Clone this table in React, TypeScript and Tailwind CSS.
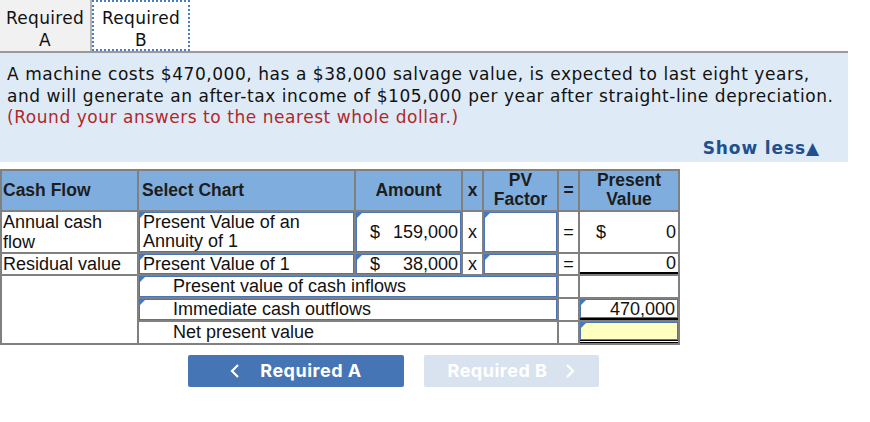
import React from "react";

const Marker = () => (
  <span className="absolute left-0 top-0 w-0 h-0 border-t-[5px] border-r-[5px] border-t-[#3b7bd0] border-r-transparent" />
);

const Input = ({
  children,
  marker = true,
  className = "",
}: {
  children?: React.ReactNode;
  marker?: boolean;
  className?: string;
}) => (
  <div className={`relative box-border overflow-hidden border border-[#4a76b8] ${className}`}>
    {marker && <Marker />}
    {children}
  </div>
);

export default function App() {
  const verdana = { fontFamily: '"DejaVu Sans", Verdana, sans-serif' };
  const arial = { fontFamily: '"Liberation Sans", Arial, sans-serif' };
  const td = "border-2 border-[#808080] p-0";
  return (
    <div className="w-[870px] h-[422px] bg-white text-[#111]" style={verdana}>
      {/* Tabs */}
      <div className="flex w-[848px] border-b-2 border-[#9a9a9a] h-[53px]">
        <div className="w-[92px] bg-[#f1f1f1] border-r-2 border-[#b5b5b5] flex flex-col items-center justify-center pt-[6px] text-[17px] leading-[22px] tracking-[0.3px] text-[#111]">
          <span>Required</span>
          <span>A</span>
        </div>
        <div className="w-[98px] bg-white border-2 border-dotted border-[#4a7cc0] flex flex-col items-center justify-center pt-[6px] text-[17px] leading-[22px] tracking-[0.3px] text-[#111]">
          <span>Required</span>
          <span>B</span>
        </div>
      </div>

      {/* Problem box */}
      <div className="w-[848px] bg-[#deebf7] pl-[7px] pr-[28px] pt-[11px] pb-[1px]">
        <p className="text-[17px] leading-[21.5px] tracking-[0.55px] whitespace-nowrap text-[#111]">
          A machine costs $470,000, has a $38,000 salvage value, is expected to last eight years,
          <br />
          and will generate an after-tax income of $105,000 per year after straight-line depreciation.
        </p>
        <p className="text-[17px] leading-[21.5px] tracking-[0.55px] text-[#b0282a]">
          (Round your answers to the nearest whole dollar.)
        </p>
        <div className="flex justify-end mt-[9px] h-[23px] items-center">
          <span className="font-bold text-[17px] tracking-[0.9px] text-[#21508f]">Show less▲</span>
        </div>
      </div>

      {/* Table */}
      <div className="mt-[7px]" style={arial}>
        <table className="table-fixed border-collapse w-[678px] text-[18px] leading-[20px] text-[#111]">
          <colgroup>
            <col className="w-[137px]" />
            <col className="w-[217px]" />
            <col className="w-[107px]" />
            <col className="w-[21px]" />
            <col className="w-[75px]" />
            <col className="w-[21px]" />
            <col className="w-[100px]" />
          </colgroup>
          <thead>
            <tr className="bg-[#7faede] font-bold text-[#1d1d1d] text-[17.5px]">
              <th className={`${td} text-left pl-[1px] font-bold`}>
                <div className="h-[39px] flex items-center">Cash Flow</div>
              </th>
              <th className={`${td} text-left pl-[3px] font-bold`}>Select Chart</th>
              <th className={`${td} text-center font-bold`}>Amount</th>
              <th className={`${td} text-center font-bold`}>x</th>
              <th className={`${td} text-center font-bold leading-[19px]`}>
                PV
                <br />
                Factor
              </th>
              <th className={`${td} text-center font-bold`}>=</th>
              <th className={`${td} text-center font-bold leading-[19px]`}>
                Present
                <br />
                Value
              </th>
            </tr>
          </thead>
          <tbody>
            <tr>
              <td className={`${td} align-top`}>
                <div className="h-[40px] pl-[1px]">
                  Annual cash
                  <br />
                  flow
                </div>
              </td>
              <td className={`${td} align-top`}>
                <Input className="h-[40px] pl-[3px] leading-[19px]">
                  Present Value of an
                  <br />
                  Annuity of 1
                </Input>
              </td>
              <td className={td}>
                <Input className="h-[40px] flex items-center justify-between pl-[13px] pr-[2px]">
                  <span>$</span>
                  <span>159,000</span>
                </Input>
              </td>
              <td className={`${td} text-center`}>x</td>
              <td className={td}>
                <Input className="h-[40px]" />
              </td>
              <td className={`${td} text-center`}>=</td>
              <td className={td}>
                <div className="h-[40px] flex items-center justify-between pl-[16px] pr-[2px]">
                  <span>$</span>
                  <span>0</span>
                </div>
              </td>
            </tr>
            <tr>
              <td className={`${td}`}>
                <div className="h-[20px] pl-[1px] whitespace-nowrap leading-[20px]">Residual value</div>
              </td>
              <td className={td}>
                <Input className="pl-[3px] h-[20px] leading-[18px]">Present Value of 1</Input>
              </td>
              <td className={td}>
                <Input className="flex items-center justify-between pl-[13px] pr-[2px] h-[20px]">
                  <span>$</span>
                  <span>38,000</span>
                </Input>
              </td>
              <td className={`${td} text-center`}>x</td>
              <td className={td}>
                <Input className="h-[20px]" />
              </td>
              <td className={`${td} text-center`}>=</td>
              <td className={td}>
                <div className="h-[20px] text-right pr-[2px] border-b-2 border-black leading-[18px]">0</div>
              </td>
            </tr>
            <tr>
              <td className={td} rowSpan={3}></td>
              <td className={td} colSpan={4}>
                <Input className="pl-[33px] h-[21px] leading-[19px]">Present value of cash inflows</Input>
              </td>
              <td className={td}></td>
              <td className={td}>
                <div className="h-[21px]" />
              </td>
            </tr>
            <tr>
              <td className={td} colSpan={4}>
                <Input className="pl-[33px] h-[21px] leading-[19px]">Immediate cash outflows</Input>
              </td>
              <td className={td}></td>
              <td className={td}>
                <div className="h-[21px] border-b-2 border-black">
                  <Input className="text-right pr-[2px] h-[19px] leading-[18px]">470,000</Input>
                </div>
              </td>
            </tr>
            <tr>
              <td className={td} colSpan={4}>
                <div className="h-[21px] pl-[34px] leading-[20px]">Net present value</div>
              </td>
              <td className={td}></td>
              <td className={td}>
                <div className="h-[21px] border-b-[3px] border-double border-black">
                  <Input className="bg-[#ffffc0] h-[18px]" />
                </div>
              </td>
            </tr>
          </tbody>
        </table>
      </div>

      {/* Buttons */}
      <div
        className="flex gap-[20px] pl-[188px] mt-[10px]"
        style={{ fontFamily: 'Inter, "Noto Sans", sans-serif' }}
      >
        <div className="w-[216px] h-[32px] bg-[#4675b6] rounded-[2px] flex items-center justify-center gap-[20px] text-white font-bold text-[18px] tracking-[0.5px]">
          <svg width="10" height="16" viewBox="0 0 10 16" fill="none">
            <path d="M8 2 L2 8 L8 14" stroke="white" strokeWidth="2.2" />
          </svg>
          <span>Required A</span>
        </div>
        <div className="w-[175px] h-[32px] bg-[#d9e3ef] rounded-[2px] flex items-center justify-center gap-[18px] text-white font-bold text-[18px] tracking-[0.5px]">
          <span>Required B</span>
          <svg width="10" height="16" viewBox="0 0 10 16" fill="none">
            <path d="M2 2 L8 8 L2 14" stroke="white" strokeWidth="2.2" />
          </svg>
        </div>
      </div>
    </div>
  );
}
